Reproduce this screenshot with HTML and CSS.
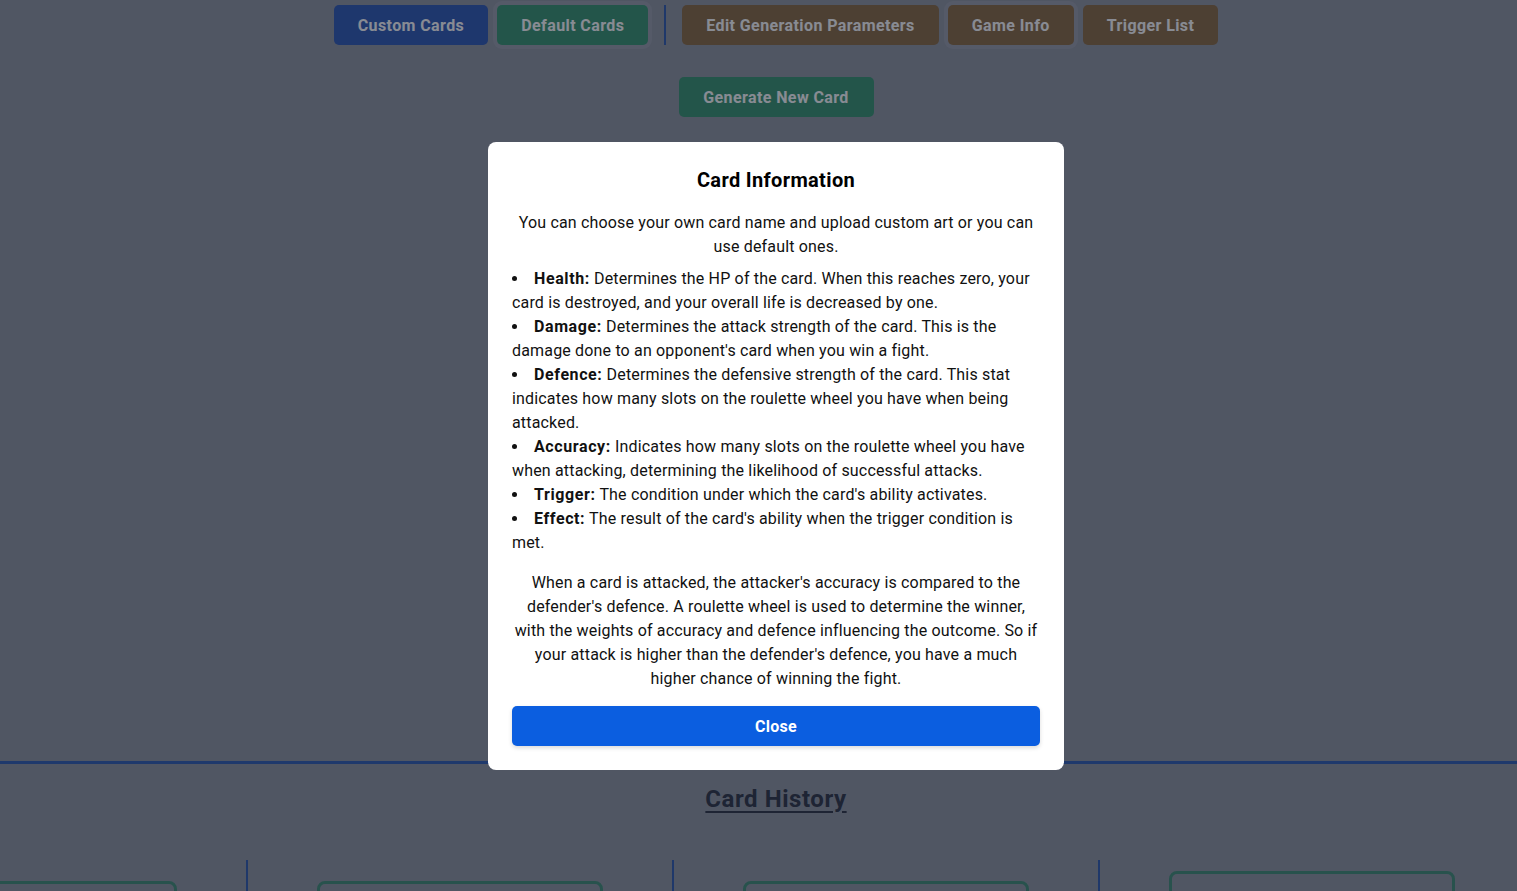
FILE: index.html
```html
<!DOCTYPE html>
<html lang="en">
<head>
<meta charset="utf-8">
<title>Card Generator</title>
<link rel="stylesheet" href="styles.css">
</head>
<body>
<div class="page">
  <nav class="toolbar">
    <button class="btn btn-blue">Custom Cards</button>
    <button class="btn btn-green btn-ring">Default Cards</button>
    <span class="divider"></span>
    <button class="btn btn-brown">Edit Generation Parameters</button>
    <button class="btn btn-brown btn-ring">Game Info</button>
    <button class="btn btn-brown">Trigger List</button>
  </nav>
  <div class="generate-row">
    <button class="btn btn-green btn-generate">Generate New Card</button>
  </div>
  <div class="spacer"></div>
  <section class="history">
    <h2 class="history-title">Card History</h2>
    <div class="history-row">
      <div class="card-slot"></div>
      <span class="vline"></span>
      <div class="card-slot"></div>
      <span class="vline"></span>
      <div class="card-slot"></div>
      <span class="vline"></span>
      <div class="card-slot card-slot-tall"></div>
    </div>
  </section>
</div>

<div class="overlay">
  <div class="modal">
    <h3 class="modal-title">Card Information</h3>
    <p class="modal-text">You can choose your own card name and upload custom art or you can use default ones.</p>
    <ul class="stat-list">
      <li><strong>Health:</strong> Determines the HP of the card. When this reaches zero, your card is destroyed, and your overall life is decreased by one.</li>
      <li><strong>Damage:</strong> Determines the attack strength of the card. This is the damage done to an opponent's card when you win a fight.</li>
      <li><strong>Defence:</strong> Determines the defensive strength of the card. This stat indicates how many slots on the roulette wheel you have when being attacked.</li>
      <li><strong>Accuracy:</strong> Indicates how many slots on the roulette wheel you have when attacking, determining the likelihood of successful attacks.</li>
      <li><strong>Trigger:</strong> The condition under which the card's ability activates.</li>
      <li><strong>Effect:</strong> The result of the card's ability when the trigger condition is met.</li>
    </ul>
    <p class="modal-text modal-text-last">When a card is attacked, the attacker's accuracy is compared to the defender's defence. A roulette wheel is used to determine the winner, with the weights of accuracy and defence influencing the outcome. So if your attack is higher than the defender's defence, you have a much higher chance of winning the fight.</p>
    <button class="close-btn">Close</button>
  </div>
</div>
</body>
</html>
```

FILE: styles.css
```css
html, body {
  margin: 0;
  padding: 0;
  overflow: hidden;
  height: 100%;
}

body {
  background: #8f949f;
  font-family: Roboto, "Liberation Sans", Arial, sans-serif;
  color: #111;
}

.page {
  width: 1552px;
  min-height: 891px;
  display: flex;
  flex-direction: column;
}

.toolbar {
  display: flex;
  justify-content: center;
  align-items: center;
  gap: 9px;
  padding-top: 5px;
}

.btn {
  height: 40px;
  padding: 0 24px;
  border: none;
  border-radius: 5px;
  font-family: inherit;
  font-size: 16px;
  font-weight: 700;
  letter-spacing: 0.4px;
  color: #ffffff;
  cursor: pointer;
}

.btn-blue { background: #2a56b2; }
.btn-green { background: #35936c; }
.btn-brown { background: #89683f; }

.btn-ring {
  box-shadow: 0 0 0 4px rgba(170, 176, 186, 0.35);
}

.divider {
  width: 2px;
  height: 40px;
  background: #2d58ad;
  margin: 0 7px;
}

.generate-row {
  display: flex;
  justify-content: center;
  padding-top: 32px;
}

.btn-generate {
  width: 195px;
  padding: 0;
}

.spacer {
  height: 644px;
}

.history {
  border-top: 3px solid #2d5ab0;
  display: flex;
  flex-direction: column;
  align-items: center;
}

.history-title {
  margin: 20px 0 0;
  font-size: 24px;
  line-height: 30px;
  font-weight: 700;
  letter-spacing: 0.55px;
  text-decoration: underline;
  text-underline-offset: 4px;
  color: #2a3140;
}

.history-row {
  align-self: flex-start;
  display: flex;
  align-items: flex-start;
  margin-left: -109px;
  margin-top: 46px;
}

.vline {
  width: 2px;
  height: 60px;
  margin: 0 69px;
  background: #2d58ad;
}

.card-slot {
  width: 286px;
  height: 120px;
  margin-top: 21px;
  box-sizing: border-box;
  border: 3px solid #3f8d72;
  border-radius: 8px;
}

.card-slot-tall {
  margin-top: 11px;
}

.overlay {
  position: fixed;
  top: 0;
  left: 0;
  width: 1552px;
  height: 100%;
  background: rgba(17, 24, 39, 0.5);
  display: flex;
  justify-content: center;
  align-items: flex-start;
}

.modal {
  margin-top: 142px;
  width: 576px;
  box-sizing: border-box;
  padding: 24px;
  background: #ffffff;
  border-radius: 8px;
  display: flex;
  flex-direction: column;
}

.modal-title {
  margin: 0 0 17px;
  font-size: 20px;
  line-height: 28px;
  font-weight: 700;
  letter-spacing: 0.35px;
  text-align: center;
  color: #000;
}

.modal-text {
  margin: 0 0 8px;
  font-size: 16px;
  line-height: 24px;
  letter-spacing: 0.17px;
  text-align: center;
  color: #111;
}

.modal-text-last {
  margin: 0 0 15px;
}

.stat-list {
  margin: 0 0 16px;
  padding: 0;
  list-style: disc inside;
  font-size: 16px;
  line-height: 24px;
  letter-spacing: 0.17px;
  color: #111;
}

.stat-list strong {
  font-weight: 700;
  letter-spacing: 0.6px;
}

.close-btn {
  height: 40px;
  border: none;
  border-radius: 5px;
  background: #0b5ee0;
  color: #ffffff;
  font-family: inherit;
  font-size: 16px;
  font-weight: 700;
  letter-spacing: 0.3px;
  box-shadow: 0 2px 4px rgba(0, 0, 0, 0.15);
}
```
